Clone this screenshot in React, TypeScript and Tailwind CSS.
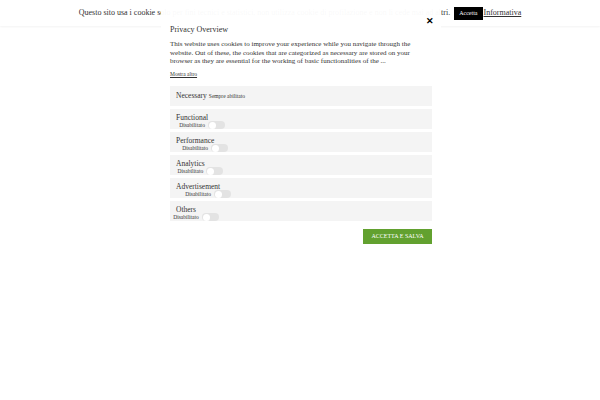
import type { ReactNode } from 'react';

const serif = { fontFamily: '"Liberation Serif", "DejaVu Serif", serif' };

// Interruttore spento (pillola grigia con pomello bianco).
function Toggle() {
  return (
    <span className="ml-[3px] inline-flex h-[8px] w-[17px] shrink-0 items-center rounded-full bg-[#e3e3e3] px-[1px]">
      <span className="h-[7px] w-[7px] rounded-full bg-white" />
    </span>
  );
}

function Row({ children }: { children: ReactNode }) {
  return <div className="flex h-[20px] items-center overflow-hidden bg-[#f4f4f4] px-[6px]">{children}</div>;
}

function Category({ title }: { title: string }) {
  return (
    <Row>
      <div className="mt-[6px] flex flex-col items-center">
        <span className="whitespace-nowrap text-[7.5px] leading-[7px] text-[#333]">{title}</span>
        <div className="flex w-0 items-center justify-center">
          <span className="w-[20px] shrink-0" />
          <span className="whitespace-nowrap text-[5.5px] leading-[7px] text-[#333]">Disabilitato</span>
          <Toggle />
        </div>
      </div>
    </Row>
  );
}

export default function App() {
  const categories = ['Functional', 'Performance', 'Analytics', 'Advertisement', 'Others'];
  return (
    <div className="relative h-[400px] w-[600px] overflow-hidden bg-white" style={serif}>
      {/* barra cookie */}
      <div className="flex h-[26px] items-center justify-center bg-white shadow-[0_1px_2px_rgba(0,0,0,0.05)]">
        <span className="mr-[4px] whitespace-nowrap text-[8px] text-[#333]">
          Questo sito usa i cookie solo per fini tecnici e statistici, non utilizza cookie di profilazione e non li cede mai ad altri.
        </span>
        <button className="bg-black px-[5px] py-[3px] text-[6px] leading-[7px] text-white">Accetta</button>
        <a className="ml-[1px] text-[8px] text-[#333] underline">Informativa</a>
      </div>

      {/* finestra privacy */}
      <div className="absolute left-[161px] top-[6px] w-[280px] bg-white/[0.97] px-[9px] pb-[11px] pt-[19px] text-[#333]">
        <span className="absolute right-[7px] top-[11px] text-[9px] font-bold leading-[9px] text-black">✕</span>
        <h2 className="text-[8px] leading-[10px]">Privacy Overview</h2>
        <p className="mt-[5px] text-[7px] leading-[8.5px]">
          This website uses cookies to improve your experience while you navigate through the website. Out of these, the
          cookies that are categorized as necessary are stored on your browser as they are essential for the working of
          basic functionalities of the ...
        </p>
        <a className="mt-[4px] block text-[5.5px] leading-[8px] underline">Mostra altro</a>
        <div className="mt-[8px] flex flex-col gap-[3px]">
          <Row>
            <span className="text-[7.5px] leading-[8px]">Necessary</span>
            <span className="ml-[2px] text-[5.5px] leading-[8px]">Sempre abilitato</span>
          </Row>
          {categories.map((c) => (
            <Category key={c} title={c} />
          ))}
        </div>
        <div className="mt-[8px] flex justify-end">
          <button className="h-[15px] w-[69px] bg-[#62a12f] text-[6px] uppercase text-white">Accetta e salva</button>
        </div>
      </div>
    </div>
  );
}
